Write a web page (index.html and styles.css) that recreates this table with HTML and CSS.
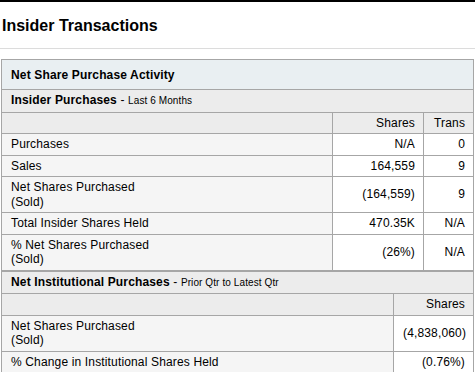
FILE: index.html
```html
<!DOCTYPE html>
<html>
<head>
<meta charset="utf-8">
<link rel="stylesheet" href="styles.css">
</head>
<body>
<div class="topbar"></div>
<h1 class="title">Insider Transactions</h1>
<div class="rule"></div>
<table class="grid">
  <colgroup><col class="c-label"><col class="c-shares"><col class="c-trans"></colgroup>
  <tr><th colspan="3" class="sec">Net Share Purchase Activity</th></tr>
  <tr><td colspan="3" class="sub"><b>Insider Purchases</b> - <span class="small">Last 6 Months</span></td></tr>
  <tr class="colhead"><td></td><td class="num">Shares</td><td class="num">Trans</td></tr>
  <tr><td class="lbl">Purchases</td><td class="num">N/A</td><td class="num">0</td></tr>
  <tr><td class="lbl">Sales</td><td class="num">164,559</td><td class="num">9</td></tr>
  <tr><td class="lbl">Net Shares Purchased<br>(Sold)</td><td class="num">(164,559)</td><td class="num">9</td></tr>
  <tr><td class="lbl">Total Insider Shares Held</td><td class="num">470.35K</td><td class="num">N/A</td></tr>
  <tr><td class="lbl">% Net Shares Purchased<br>(Sold)</td><td class="num">(26%)</td><td class="num">N/A</td></tr>
</table>
<table class="grid second">
  <colgroup><col class="c-label2"><col class="c-shares2"></colgroup>
  <tr><td colspan="2" class="sub"><b>Net Institutional Purchases</b> - <span class="small">Prior Qtr to Latest Qtr</span></td></tr>
  <tr class="colhead"><td></td><td class="num">Shares</td></tr>
  <tr><td class="lbl">Net Shares Purchased<br>(Sold)</td><td class="num">(4,838,060)</td></tr>
  <tr><td class="lbl">% Change in Institutional Shares Held</td><td class="num">(0.76%)</td></tr>
</table>
</body>
</html>
```

FILE: styles.css
```css
html, body {
  margin: 0;
  padding: 0;
  background: #fff;
}
body {
  font-family: Arial, "Liberation Sans", sans-serif;
  color: #000;
  font-size: 12px;
}
.topbar {
  height: 2px;
  background: #000;
}
.title {
  margin: 0;
  padding: 15px 0 0 2px;
  height: 33px;
  box-sizing: border-box;
  font-size: 16px;
  font-weight: bold;
  line-height: 18px;
}
.rule {
  height: 1px;
  background: #dcdcdc;
  margin: 13px 0 10px 0;
}
.grid {
  margin-left: 1px;
  width: 472px;
  border-collapse: collapse;
  table-layout: fixed;
  border: 1px solid #a6a6a6;
  letter-spacing: 0.15px;
}
.grid td, .grid th {
  border: 1px solid #a6a6a6;
  padding: 3px 8px 3px 9px;
  line-height: 14.5px;
  font-size: 12px;
  text-align: left;
  vertical-align: middle;
}
.c-label { width: 331px; }
.c-shares { width: 91px; }
.c-trans { width: 50px; }
.c-label2 { width: 392px; }
.c-shares2 { width: 80px; }
.grid th.sec {
  background: #e9eff2;
  font-weight: bold;
  line-height: 16px;
  padding-top: 7px;
  padding-bottom: 6px;
}
.sub {
  background: #ececec;
}
.small {
  font-size: 10px;
  letter-spacing: 0.1px;
}
.colhead td {
  background: #ececec;
}
.lbl {
  background: #f5f5f5;
}
.grid td.num {
  text-align: right;
}
```
